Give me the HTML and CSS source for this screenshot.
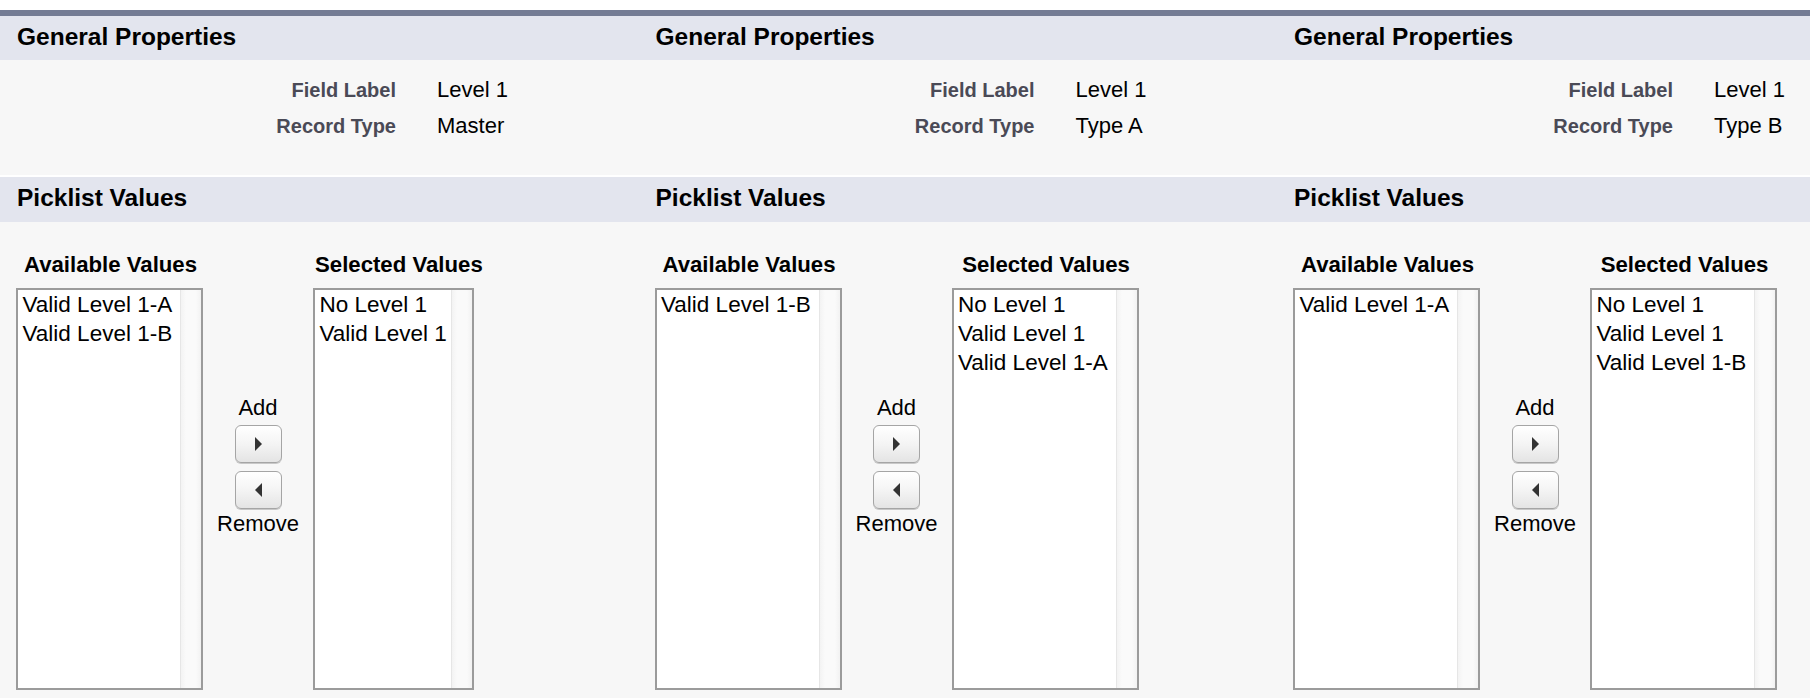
FILE: index.html
```html
<!DOCTYPE html>
<html>
<head>
<meta charset="utf-8">
<title>Picklist Values by Record Type</title>
<link rel="stylesheet" href="styles.css">
</head>
<body>
<div class="page">
  <div class="cols">

    <section class="block">
      <div class="subhead"><h3>General Properties</h3></div>
      <div class="props">
        <div class="prop-row"><span class="lbl">Field Label</span><span class="val">Level 1</span></div>
        <div class="prop-row"><span class="lbl">Record Type</span><span class="val">Master</span></div>
      </div>
      <div class="subhead sep"><h3>Picklist Values</h3></div>
      <div class="dual">
        <div class="listcell">
          <div class="listtitle">Available Values</div>
          <div class="listbox w-wide">
            <div class="opts"><div>Valid Level 1-A</div><div>Valid Level 1-B</div></div>
            <div class="sb"></div>
          </div>
        </div>
        <div class="btncell">
          <div class="btnlbl">Add</div>
          <div class="arrowbtn add"><svg width="9" height="16" viewBox="0 0 9 16"><polygon points="1,1 8,8 1,15" fill="#333"/></svg></div>
          <div class="arrowbtn rem"><svg width="9" height="16" viewBox="0 0 9 16"><polygon points="8,1 1,8 8,15" fill="#333"/></svg></div>
          <div class="btnlbl rm">Remove</div>
        </div>
        <div class="listcell">
          <div class="listtitle">Selected Values</div>
          <div class="listbox w-narrow">
            <div class="opts"><div>No Level 1</div><div>Valid Level 1</div></div>
            <div class="sb"></div>
          </div>
        </div>
      </div>
    </section>

    <section class="block">
      <div class="subhead"><h3>General Properties</h3></div>
      <div class="props">
        <div class="prop-row"><span class="lbl">Field Label</span><span class="val">Level 1</span></div>
        <div class="prop-row"><span class="lbl">Record Type</span><span class="val">Type A</span></div>
      </div>
      <div class="subhead sep"><h3>Picklist Values</h3></div>
      <div class="dual">
        <div class="listcell">
          <div class="listtitle">Available Values</div>
          <div class="listbox w-wide">
            <div class="opts"><div>Valid Level 1-B</div></div>
            <div class="sb"></div>
          </div>
        </div>
        <div class="btncell">
          <div class="btnlbl">Add</div>
          <div class="arrowbtn add"><svg width="9" height="16" viewBox="0 0 9 16"><polygon points="1,1 8,8 1,15" fill="#333"/></svg></div>
          <div class="arrowbtn rem"><svg width="9" height="16" viewBox="0 0 9 16"><polygon points="8,1 1,8 8,15" fill="#333"/></svg></div>
          <div class="btnlbl rm">Remove</div>
        </div>
        <div class="listcell">
          <div class="listtitle">Selected Values</div>
          <div class="listbox w-wide">
            <div class="opts"><div>No Level 1</div><div>Valid Level 1</div><div>Valid Level 1-A</div></div>
            <div class="sb"></div>
          </div>
        </div>
      </div>
    </section>

    <section class="block">
      <div class="subhead"><h3>General Properties</h3></div>
      <div class="props">
        <div class="prop-row"><span class="lbl">Field Label</span><span class="val">Level 1</span></div>
        <div class="prop-row"><span class="lbl">Record Type</span><span class="val">Type B</span></div>
      </div>
      <div class="subhead sep"><h3>Picklist Values</h3></div>
      <div class="dual">
        <div class="listcell">
          <div class="listtitle">Available Values</div>
          <div class="listbox w-wide">
            <div class="opts"><div>Valid Level 1-A</div></div>
            <div class="sb"></div>
          </div>
        </div>
        <div class="btncell">
          <div class="btnlbl">Add</div>
          <div class="arrowbtn add"><svg width="9" height="16" viewBox="0 0 9 16"><polygon points="1,1 8,8 1,15" fill="#333"/></svg></div>
          <div class="arrowbtn rem"><svg width="9" height="16" viewBox="0 0 9 16"><polygon points="8,1 1,8 8,15" fill="#333"/></svg></div>
          <div class="btnlbl rm">Remove</div>
        </div>
        <div class="listcell">
          <div class="listtitle">Selected Values</div>
          <div class="listbox w-wide">
            <div class="opts"><div>No Level 1</div><div>Valid Level 1</div><div>Valid Level 1-B</div></div>
            <div class="sb"></div>
          </div>
        </div>
      </div>
    </section>

  </div>
</div>
</body>
</html>
```

FILE: styles.css
```css
html, body {
  margin: 0;
  padding: 0;
  background: #ffffff;
}

body {
  font-family: "Liberation Sans", Arial, Helvetica, sans-serif;
  color: #000;
  width: 1810px;
  height: 698px;
  overflow: hidden;
}

.page {
  padding-top: 10px;
}

.cols {
  display: grid;
  grid-template-columns: 638.5px 638.5px 638.5px;
  border-top: 6px solid #747c94;
  width: 1810px;
  overflow: hidden;
  background: #f7f7f7;
}

.block {
  display: flex;
  flex-direction: column;
  min-width: 0;
}

.subhead {
  background: #e3e5ee;
  height: 44px;
  box-sizing: border-box;
  padding: 6.5px 0 0 17px;
}

.subhead h3 {
  margin: 0;
  font-size: 24.5px;
  line-height: 28px;
  font-weight: bold;
  white-space: nowrap;
}

.subhead.sep {
  height: 47px;
  border-top: 2px solid #ffffff;
  padding-top: 7px;
}

.props {
  padding: 12px 0 31px 0;
}

.prop-row {
  display: grid;
  grid-template-columns: 396px auto;
  column-gap: 41px;
  height: 36px;
  line-height: 36px;
  white-space: nowrap;
}

.lbl {
  text-align: right;
  font-size: 20px;
  font-weight: bold;
  color: #4a4a56;
}

.val {
  font-size: 22px;
  color: #000;
}

.dual {
  display: flex;
  align-items: stretch;
  padding: 30px 0 8px 16px;
}

.listcell {
  display: flex;
  flex-direction: column;
}

.listtitle {
  font-size: 22.2px;
  font-weight: bold;
  line-height: 26px;
  margin-bottom: 10px;
  text-align: center;
  padding-left: 2px;
  white-space: nowrap;
}

.listbox {
  align-self: flex-start;
  display: flex;
  height: 402px;
  box-sizing: border-box;
  border: 2px solid #9b9b9b;
  background: #ffffff;
}

.listbox.w-wide { width: 187px; }
.listbox.w-narrow { width: 161px; }

.opts {
  flex: 1;
  padding: 0 0 0 4.5px;
  font-size: 22.5px;
  line-height: 29px;
  white-space: nowrap;
  overflow: hidden;
}

.sb {
  width: 20px;
  border-left: 1px solid #e6e6e6;
  background: linear-gradient(to right, #f3f3f3, #fafafa 25%, #fafafa 75%, #f2f2f2);
}

.btncell {
  width: 110px;
  display: flex;
  flex-direction: column;
  align-items: center;
  justify-content: center;
  padding-bottom: 11px;
}

.btnlbl {
  font-size: 22px;
  line-height: 26px;
  margin-bottom: 4px;
}

.btnlbl.rm {
  margin-bottom: 0;
  margin-top: 2px;
}

.arrowbtn {
  width: 47px;
  height: 38px;
  box-sizing: border-box;
  border: 1px solid #a5a5a5;
  border-radius: 6px;
  background: linear-gradient(#ffffff, #f4f4f4 50%, #e4e4e4);
  box-shadow: 0 1px 0 #c8c8c8;
  display: flex;
  align-items: center;
  justify-content: center;
}

.arrowbtn.add {
  margin-bottom: 8px;
}

.arrowbtn svg {
  display: block;
}
```
